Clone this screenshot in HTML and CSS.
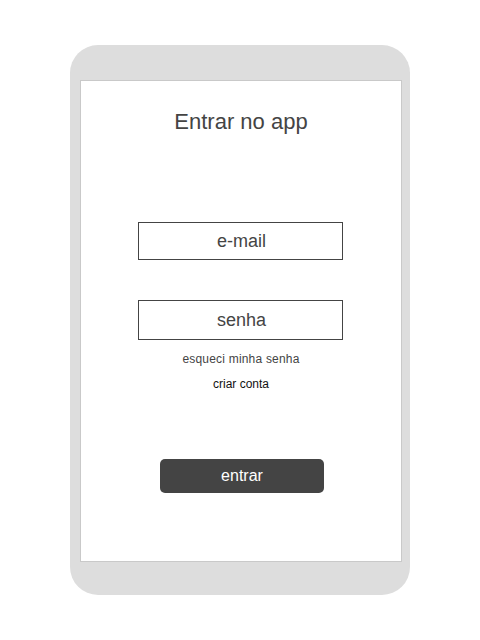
FILE: index.html
```html
<!DOCTYPE html>
<html lang="pt">
<head>
<meta charset="utf-8">
<link rel="stylesheet" href="styles.css">
</head>
<body>
<div class="device">
  <div class="screen">
    <h1 class="title">Entrar no app</h1>
    <div class="field field-email">e-mail</div>
    <div class="field field-pass">senha</div>
    <a class="link forgot">esqueci minha senha</a>
    <a class="link create">criar conta</a>
    <button class="btn">entrar</button>
  </div>
</div>
</body>
</html>
```
FILE: styles.css
```css
html, body {
  margin: 0;
  padding: 0;
  background: #ffffff;
  font-family: "Liberation Sans", Arial, sans-serif;
}
.device {
  box-sizing: border-box;
  width: 340px;
  height: 550px;
  margin: 45px 0 0 70px;
  padding: 35px 8px 33px 10px;
  background: #dddddd;
  border-radius: 28px;
}
.screen {
  box-sizing: border-box;
  width: 322px;
  height: 482px;
  background: #ffffff;
  border: 1px solid #c9c9c9;
  display: flex;
  flex-direction: column;
  align-items: center;
}
.title {
  margin: 26px 0 0;
  font-size: 22px;
  line-height: 30px;
  font-weight: normal;
  color: #444444;
}
.field {
  box-sizing: border-box;
  width: 205px;
  margin-right: 2px;
  padding-left: 3px;
  border: 1px solid #444444;
  display: flex;
  align-items: center;
  justify-content: center;
  font-size: 18px;
  color: #444444;
}
.field-email {
  height: 38px;
  margin-top: 85px;
}
.field-pass {
  height: 40px;
  margin-top: 40px;
}
.link {
  font-size: 12px;
  line-height: 14px;
}
.forgot {
  margin-top: 12px;
  color: #444444;
  letter-spacing: 0.2px;
}
.create {
  margin-top: 11px;
  color: #111111;
}
.btn {
  margin-top: 68px;
  margin-left: 2px;
  width: 164px;
  height: 34px;
  border: none;
  border-radius: 5px;
  background: #444444;
  color: #ffffff;
  font-family: "Liberation Sans", Arial, sans-serif;
  font-size: 16px;
  padding: 0 0 0 0;
}
```
